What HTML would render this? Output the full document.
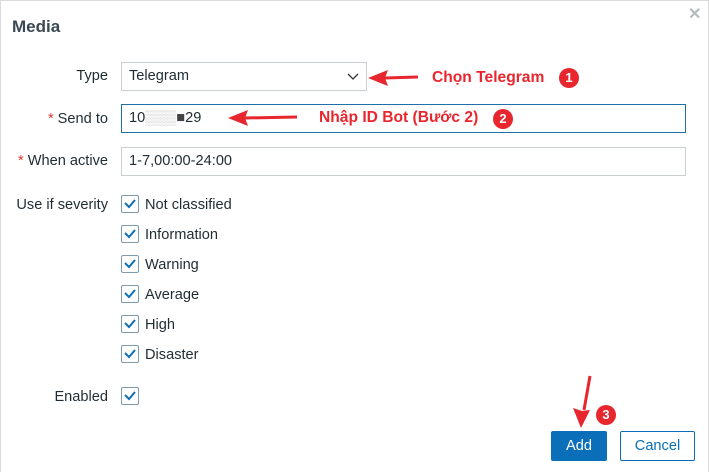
<!DOCTYPE html>
<html><head><meta charset="utf-8"><style>
body{margin:0;width:709px;height:473px;background:#fff;font-family:"Liberation Sans",Arial,sans-serif;font-size:14.6px;color:#1f2c33;position:relative;overflow:hidden}
.frame{position:absolute;left:0;top:0;width:707px;height:471px;border:1px solid #d8dcdf;border-bottom:none}
.a{position:absolute}
.lbl{position:absolute;right:601px;text-align:right;white-space:nowrap}
.req{color:#e33734}
.inp{position:absolute;border:1px solid #c9cfd3;box-sizing:border-box;padding-left:7px;line-height:27px;background:#fff}
.cb{position:absolute;left:121px;width:18px;height:18px;border:1px solid #7f9cae;box-sizing:border-box;border-radius:2px}
.cb svg{position:absolute;left:2px;top:3px}
.cl{position:absolute;left:145px}
.red{color:#e8262e;font-weight:bold;font-size:15.6px}
.num{position:absolute;width:20px;height:20px;border-radius:50%;background:#e8262e;color:#fff;font-weight:bold;font-size:13px;text-align:center;line-height:20px}
</style></head><body>
<div class="frame"></div>
<div class="a" style="left:12px;top:17px;font-size:17px;font-weight:bold;color:#3a4a54">Media</div>
<div class="a" style="left:688px;top:4px;color:#b7bcbf;font-size:16px;font-weight:bold">✕</div>

<div class="lbl" style="top:68px">Type</div>
<div class="inp" style="left:121px;top:62px;width:246px;height:29px">Telegram
<svg class="a" style="left:225px;top:10px" width="12" height="8"><path d="M1 1l5 5 5-5" fill="none" stroke="#333" stroke-width="1.3"/></svg></div>

<div class="lbl" style="top:111px"><span class="req">*</span> Send to</div>
<div class="inp" style="left:121px;top:104px;width:565px;height:29px;border-color:#1f6fa8">10<span style="color:#ccc">▒▒▒</span><span style="color:#444">■</span>29</div>

<div class="lbl" style="top:153px"><span class="req">*</span> When active</div>
<div class="inp" style="left:121px;top:147px;width:565px;height:29px">1-7,00:00-24:00</div>

<div class="lbl" style="top:197px">Use if severity</div>
<div class="cb" style="top:195px"><svg width="12" height="10"><path d="M1 4l4 4 6-7" fill="none" stroke="#0a6fb8" stroke-width="2"/></svg></div><div class="cl" style="top:197px">Not classified</div>
<div class="cb" style="top:225px"><svg width="12" height="10"><path d="M1 4l4 4 6-7" fill="none" stroke="#0a6fb8" stroke-width="2"/></svg></div><div class="cl" style="top:227px">Information</div>
<div class="cb" style="top:255px"><svg width="12" height="10"><path d="M1 4l4 4 6-7" fill="none" stroke="#0a6fb8" stroke-width="2"/></svg></div><div class="cl" style="top:257px">Warning</div>
<div class="cb" style="top:285px"><svg width="12" height="10"><path d="M1 4l4 4 6-7" fill="none" stroke="#0a6fb8" stroke-width="2"/></svg></div><div class="cl" style="top:287px">Average</div>
<div class="cb" style="top:315px"><svg width="12" height="10"><path d="M1 4l4 4 6-7" fill="none" stroke="#0a6fb8" stroke-width="2"/></svg></div><div class="cl" style="top:317px">High</div>
<div class="cb" style="top:345px"><svg width="12" height="10"><path d="M1 4l4 4 6-7" fill="none" stroke="#0a6fb8" stroke-width="2"/></svg></div><div class="cl" style="top:347px">Disaster</div>

<div class="lbl" style="top:389px">Enabled</div>
<div class="cb" style="top:387px"><svg width="12" height="10"><path d="M1 4l4 4 6-7" fill="none" stroke="#0a6fb8" stroke-width="2"/></svg></div>

<div class="a" style="left:551px;top:431px;width:56px;height:30px;background:#0a6fb8;border-radius:2px;color:#fff;text-align:center;line-height:30px">Add</div>
<div class="a" style="left:620px;top:431px;width:75px;height:30px;box-sizing:border-box;border:1px solid #0a6fb8;border-radius:2px;color:#0a6fb8;text-align:center;line-height:28px">Cancel</div>

<svg class="a" style="left:0;top:0" width="709" height="473">
<g stroke="#e8262e" stroke-width="3" fill="#e8262e">
<line x1="418" y1="77" x2="385" y2="78"/><path d="M368 78l20-8-3 8 3 8z" stroke="none"/>
<line x1="297" y1="117" x2="245" y2="118"/><path d="M228 118l20-8-3 8 3 8z" stroke="none"/>
<line x1="590" y1="376" x2="584" y2="410"/><path d="M581 428l-8-20 9 3 8-1z" stroke="none"/>
</g></svg>
<div class="a red" style="left:432px;top:69px">Chọn Telegram</div>
<div class="num" style="left:559px;top:68px">1</div>
<div class="a red" style="left:319px;top:109px">Nhập ID Bot (Bước 2)</div>
<div class="num" style="left:493px;top:109px">2</div>
<div class="num" style="left:596px;top:405px">3</div>
</body></html>
